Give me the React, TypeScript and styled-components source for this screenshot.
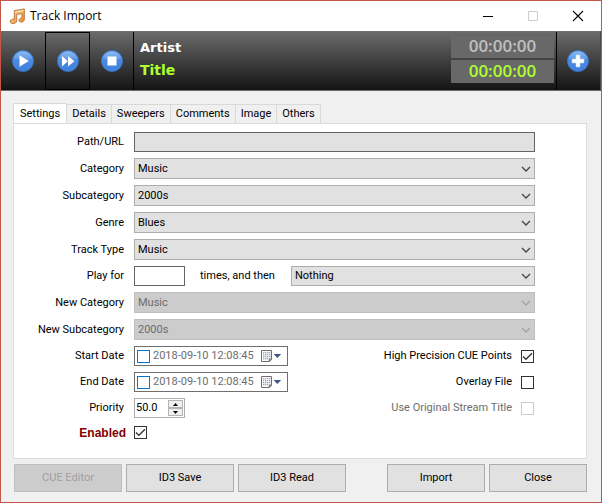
import React from "react";
import styled, { createGlobalStyle, css } from "styled-components";

const GlobalStyle = createGlobalStyle`
  *, *::before, *::after { box-sizing: border-box; }
  body { margin: 0; background: #f0f0f0; }
  button, input, select { font: inherit; color: inherit; margin: 0; border-radius: 0; }
`;

const uiFont = `Roboto, "Liberation Sans", sans-serif`;

const Window = styled.div`
  min-height: 100vh;
  display: flex;
  flex-direction: column;
  border: 1px solid #c2574b;
  background: #f0f0f0;
  color: #000;
  font: 11px/16px ${uiFont};
`;

const TitleBar = styled.header`
  display: flex;
  align-items: center;
  height: 30px;
  padding-left: 8px;
  background: #fff;
`;

const WindowTitle = styled.h1`
  flex: 1;
  margin: 0 0 0 4px;
  font: 12px/16px "Open Sans", "Noto Sans", sans-serif;
`;

const CaptionButton = styled.button`
  width: 45px;
  height: 28px;
  padding: 0;
  border: 0;
  background: none;
  display: grid;
  place-items: center;
`;

const CaptionButtons = styled.div`
  display: flex;
  margin-right: 1px;
`;

const Player = styled.section`
  display: flex;
  height: 60px;
  border-top: 1px solid #6e6e6e;
  border-bottom: 1px solid #6a6a6a;
  border-right: 1px solid #4a4a4a;
  background: linear-gradient(#6a6a6a, #141414);
`;

const PlayerButton = styled.button<{ $edge?: "all" | "left" | "right" }>`
  width: 44px;
  height: 58px;
  padding: 0;
  background: none;
  border: 0 solid #000;
  display: grid;
  place-items: center;
  ${(p) => p.$edge === "all" && css`width: 45px; border-width: 1px;`}
  ${(p) => p.$edge === "left" && css`padding-right: 2px; border-left-width: 1px;`}
  ${(p) => p.$edge === "right" && css`border-right-width: 1px;`}
`;

const TrackInfo = styled.div`
  flex: 1;
  padding: 5px 0 0 6px;
  font-family: "DejaVu Sans", sans-serif;
  font-weight: bold;
`;

const Artist = styled.div`
  color: #fff;
  font-size: 13px;
  line-height: 22px;
`;

const TrackTitle = styled.div`
  color: #adff2f;
  font-size: 14px;
  line-height: 22px;
`;

const Timers = styled.div`
  display: flex;
  flex-direction: column;
  gap: 2px;
  width: 103px;
  margin: 4px 2px 0 0;
`;

const Timer = styled.div<{ $live?: boolean }>`
  height: ${(p) => (p.$live ? 23 : 22)}px;
  background: #686868;
  color: ${(p) => (p.$live ? "#adff2f" : "#c0c0c0")};
  font: 600 17px/${(p) => (p.$live ? 22 : 20)}px "Open Sans", "Noto Sans", sans-serif;
  text-align: center;
`;

const Body = styled.main`
  flex: 1;
  display: flex;
  flex-direction: column;
  padding: 12px 14px 10px 12px;
`;

const TabList = styled.div`
  display: flex;
  align-items: flex-end;
`;

const Tab = styled.button<{ $active?: boolean }>`
  height: ${(p) => (p.$active ? 21 : 19)}px;
  padding: ${(p) => (p.$active ? "0 6px 1px" : "0 5px")};
  margin-bottom: ${(p) => (p.$active ? -1 : 0)}px;
  border: 1px solid #d9d9d9;
  border-bottom: 0;
  border-left-width: ${(p) => (p.$active ? 1 : 0)}px;
  background: ${(p) => (p.$active ? "#fff" : "#f0f0f0")};
  white-space: nowrap;
`;

const Panel = styled.section`
  flex: 1;
  display: flex;
  flex-direction: column;
  gap: 6px;
  padding: 8px 51px 12px 0;
  border: 1px solid #dcdcdc;
  background: #fff;
`;

const Row = styled.div<{ $height?: number }>`
  display: flex;
  align-items: center;
  height: ${(p) => p.$height ?? 20}px;
`;

const FieldLabel = styled.label<{ $strong?: boolean }>`
  width: ${(p) => (p.$strong ? 112 : 110)}px;
  margin-right: ${(p) => (p.$strong ? 8 : 10)}px;
  text-align: right;
  white-space: nowrap;
  ${(p) => p.$strong && css`color: #800000; font: bold 12px/16px "Liberation Sans", Arial, sans-serif;`}
`;

const TextInput = styled.input<{ $short?: boolean }>`
  ${(p) => (p.$short ? css`width: 51px;` : css`flex: 1; min-width: 0;`)}
  height: 20px;
  padding: 0 3px;
  border: 1px solid #646464;
  background: ${(p) => (p.readOnly ? "#e1e1e1" : "#fff")};
`;

const SelectBox = styled.div`
  flex: 1;
  min-width: 0;
  display: grid;
  align-items: center;
  height: 100%;
  > * { grid-area: 1 / 1; }
  > svg { justify-self: end; margin-right: 4px; pointer-events: none; }
`;

const Select = styled.select`
  appearance: none;
  width: 100%;
  height: 100%;
  padding: 0 20px 0 3px;
  border: 1px solid #adadad;
  background: #e1e1e1;
  &:disabled { background: #ccc; border-color: #bfbfbf; color: #6d6d6d; opacity: 1; }
`;

const Between = styled.span`
  width: 106px;
  padding-left: 15px;
  white-space: nowrap;
`;

const CheckBox = styled.input<{ $accent?: boolean }>`
  appearance: none;
  flex: none;
  width: 13px;
  height: 13px;
  border: 1px solid ${(p) => (p.$accent ? "#0078d7" : "#333")};
  background: #fff;
  &:disabled { border-color: #ccc; }
`;

const CheckWrap = styled.span`
  display: grid;
  place-items: center;
  > * { grid-area: 1 / 1; }
  > svg { pointer-events: none; }
`;

const OptionLabel = styled.label<{ $muted?: boolean }>`
  margin: 0 9px 0 auto;
  white-space: nowrap;
  color: ${(p) => (p.$muted ? "#6d6d6d" : "#000")};
`;

const OptionBox = styled.span`
  display: flex;
  margin-right: 1px;
`;

const DateField = styled.div`
  display: flex;
  align-items: center;
  width: 154px;
  height: 20px;
  padding: 0 5px 0 2px;
  border: 1px solid #6f6f6f;
  background: #fff;
  color: #6d6d6d;
`;

const DateText = styled.input`
  flex: 1;
  min-width: 0;
  height: 16px;
  padding: 0 0 0 3px;
  border: 0;
  background: none;
`;

const PlainButton = styled.button`
  flex: none;
  padding: 0;
  border: 0;
  background: none;
  display: flex;
  align-items: center;
`;

const Spinner = styled.div`
  display: flex;
  width: 51px;
  height: 20px;
  padding: 1px;
  border: 1px solid #abadb3;
  background: #fff;
`;

const SpinnerInput = styled.input`
  flex: 1;
  min-width: 0;
  padding: 0;
  border: 0;
`;

const SpinnerButtons = styled.div`
  display: flex;
  flex-direction: column;
  width: 15px;
`;

const SpinButton = styled.button`
  flex: 1;
  min-height: 0;
  padding: 0;
  border: 1px solid #b4b4b4;
  background: #f0f0f0;
  display: grid;
  place-items: center;
`;

const Footer = styled.footer`
  display: flex;
  gap: 4px;
  margin: 5px 0 0 1px;
`;

const ActionButton = styled.button<{ $width: number; $apart?: boolean }>`
  width: ${(p) => p.$width}px;
  height: 28px;
  padding: 0;
  margin-left: ${(p) => (p.$apart ? "auto" : "0")};
  border: 1px solid #adadad;
  background: #e1e1e1;
  &:disabled { background: #ccc; border-color: #bfbfbf; color: #a0a0a0; }
`;

const MusicIcon = () => (
  <svg width="17" height="17" viewBox="0 0 17 17" aria-hidden="true">
    <defs>
      <linearGradient id="note" x1="0" y1="0" x2="1" y2="1">
        <stop offset="0" stopColor="#fbd79a" />
        <stop offset="1" stopColor="#e98a2c" />
      </linearGradient>
    </defs>
    <path
      d="M5.3 2.6 15.3 0.9V11.4C15.3 13.2 13.8 14.2 12.2 14.1 10.6 14 9.8 13 10 11.9 10.3 10.6 11.6 9.9 12.9 10.2V5.6L7.7 6.5V12.8C7.6 14.6 5.9 15.7 3.9 15.6 2 15.5 0.9 14.5 1.1 13.1 1.4 11.6 3.4 10.8 5.3 11.3Z"
      fill="url(#note)"
      stroke="#b9713a"
      strokeWidth="0.9"
      strokeLinejoin="round"
    />
    <path d="M6.2 3.4 14.4 2V3.2L6.2 4.6Z" fill="#fdeac4" />
  </svg>
);

const Orb = ({ children }: { children: React.ReactNode }) => (
  <svg width="24" height="24" viewBox="0 0 24 24" aria-hidden="true">
    <defs>
      <linearGradient id="orb" x1="0" y1="0" x2="0" y2="1">
        <stop offset="0" stopColor="#4d86d4" />
        <stop offset="0.45" stopColor="#4a8ae0" />
        <stop offset="1" stopColor="#3f80dd" />
      </linearGradient>
      <linearGradient id="shine" x1="0" y1="0" x2="0" y2="1">
        <stop offset="0" stopColor="#8dbaf0" />
        <stop offset="1" stopColor="#5b98e6" />
      </linearGradient>
    </defs>
    <circle cx="12" cy="12" r="10.6" fill="url(#orb)" stroke="#3a72bd" strokeWidth="0.8" />
    <path d="M2.6 9.8A9.6 9.6 0 0 1 21.4 9.8Q12 12 2.6 9.8Z" fill="url(#shine)" />
    <g fill="#fff">{children}</g>
  </svg>
);

const Chevron = ({ color = "#444" }: { color?: string }) => (
  <svg width="10" height="6" viewBox="0 0 10 6" aria-hidden="true">
    <path d="M1 1 5 5 9 1" fill="none" stroke={color} strokeWidth="1.3" />
  </svg>
);

const CalendarIcon = () => (
  <svg width="21" height="14" viewBox="0 0 21 14" aria-hidden="true">
    <path d="M0.5 1.5H10.5V10.5L8.5 12.5H0.5Z" fill="#fff" stroke="#77696c" />
    <path d="M10.5 10 8 12.5V10Z" fill="#8b7f87" stroke="#77696c" strokeWidth="0.5" />
    <g fill="#a3adbf">
      {[2, 4, 6, 8].map((x) => [3, 5, 7, 9].map((y) => <rect key={`${x}-${y}`} x={x} y={y} width="1.4" height="1.4" />))}
    </g>
    <path d="M12.6 5H20.2L16.4 9Z" fill="#3b5686" />
  </svg>
);

const Tick = () => (
  <svg width="13" height="13" viewBox="0 0 13 13" aria-hidden="true">
    <path d="M2 6.5 4.9 9.3 11 3.2" fill="none" stroke="#333" strokeWidth="1.3" />
  </svg>
);

type CheckProps = { id: string; checked?: boolean; disabled?: boolean };

function Check({ id, checked, disabled }: CheckProps) {
  const [on, setOn] = React.useState(!!checked);
  return (
    <CheckWrap>
      <CheckBox id={id} type="checkbox" checked={on} disabled={disabled} onChange={(e) => setOn(e.target.checked)} />
      {on && <Tick />}
    </CheckWrap>
  );
}

function Option({ label, ...check }: CheckProps & { label: string }) {
  return (
    <>
      <OptionLabel htmlFor={check.id} $muted={check.disabled}>{label}</OptionLabel>
      <OptionBox><Check {...check} /></OptionBox>
    </>
  );
}

function DropDown({ id, value, disabled, label }: { id: string; value: string; disabled?: boolean; label?: string }) {
  return (
    <SelectBox>
      <Select id={id} disabled={disabled} aria-label={label} defaultValue={value}>
        <option>{value}</option>
      </Select>
      <Chevron color={disabled ? "#a3a3a3" : "#444"} />
    </SelectBox>
  );
}

function SelectRow({ id, label, value, disabled }: { id: string; label: string; value: string; disabled?: boolean }) {
  return (
    <Row $height={21}>
      <FieldLabel htmlFor={id}>{label}</FieldLabel>
      <DropDown id={id} value={value} disabled={disabled} />
    </Row>
  );
}

function DatePicker({ id, label }: { id: string; label: string }) {
  return (
    <>
      <FieldLabel htmlFor={id}>{label}</FieldLabel>
      <DateField>
        <CheckBox type="checkbox" $accent aria-label={`Use ${label}`} />
        <DateText id={id} defaultValue="2018-09-10 12:08:45" />
        <PlainButton type="button" aria-label={`Pick ${label}`}><CalendarIcon /></PlainButton>
      </DateField>
    </>
  );
}

export default function App() {
  return (
    <>
      <GlobalStyle />
      <Window>
        <TitleBar>
          <MusicIcon />
          <WindowTitle>Track Import</WindowTitle>
          <CaptionButtons>
            <CaptionButton aria-label="Minimize">
              <svg width="12" height="12"><path d="M1 6.5H11" stroke="#000" /></svg>
            </CaptionButton>
            <CaptionButton aria-label="Maximize" disabled>
              <svg width="12" height="12"><path d="M1.5 1.5H10.5V10.5H1.5Z" fill="none" stroke="#ccc" /></svg>
            </CaptionButton>
            <CaptionButton aria-label="Close window">
              <svg width="12" height="12"><path d="M1 1 11 11M11 1 1 11" stroke="#000" strokeWidth="1.1" /></svg>
            </CaptionButton>
          </CaptionButtons>
        </TitleBar>

        <Player>
          <PlayerButton aria-label="Play">
            <Orb><path d="M8.5 6.2V17.8L17.8 12Z" /></Orb>
          </PlayerButton>
          <PlayerButton aria-label="Fast forward" $edge="all">
            <Orb><path d="M6 7V17.4L11.8 12.2ZM12 7V17.4L18.4 12.2Z" /></Orb>
          </PlayerButton>
          <PlayerButton aria-label="Stop" $edge="right">
            <Orb><path d="M7.5 7.5H16.5V16.5H7.5Z" /></Orb>
          </PlayerButton>
          <TrackInfo>
            <Artist>Artist</Artist>
            <TrackTitle>Title</TrackTitle>
          </TrackInfo>
          <Timers>
            <Timer>00:00:00</Timer>
            <Timer $live>00:00:00</Timer>
          </Timers>
          <PlayerButton aria-label="Add" $edge="left">
            <Orb><path d="M10.2 6.2H13.8V10.2H17.8V13.8H13.8V17.8H10.2V13.8H6.2V10.2H10.2Z" stroke="#fff" strokeWidth="0.6" strokeLinejoin="round" /></Orb>
          </PlayerButton>
        </Player>

        <Body>
          <TabList role="tablist">
            {["Settings", "Details", "Sweepers", "Comments", "Image", "Others"].map((name, i) => (
              <Tab key={name} role="tab" aria-selected={i === 0} $active={i === 0}>{name}</Tab>
            ))}
          </TabList>

          <Panel role="tabpanel">
            <Row>
              <FieldLabel htmlFor="path">Path/URL</FieldLabel>
              <TextInput id="path" readOnly />
            </Row>
            <SelectRow id="category" label="Category" value="Music" />
            <SelectRow id="subcategory" label="Subcategory" value="2000s" />
            <SelectRow id="genre" label="Genre" value="Blues" />
            <SelectRow id="type" label="Track Type" value="Music" />
            <Row>
              <FieldLabel htmlFor="playfor">Play for</FieldLabel>
              <TextInput id="playfor" $short />
              <Between>times, and then</Between>
              <DropDown id="then" value="Nothing" label="Then" />
            </Row>
            <SelectRow id="newcategory" label="New Category" value="Music" disabled />
            <SelectRow id="newsubcategory" label="New Subcategory" value="2000s" disabled />
            <Row>
              <DatePicker id="start" label="Start Date" />
              <Option id="precision" label="High Precision CUE Points" checked />
            </Row>
            <Row>
              <DatePicker id="end" label="End Date" />
              <Option id="overlay" label="Overlay File" />
            </Row>
            <Row>
              <FieldLabel htmlFor="priority">Priority</FieldLabel>
              <Spinner>
                <SpinnerInput id="priority" defaultValue="50.0" />
                <SpinnerButtons>
                  <SpinButton aria-label="Increase">
                    <svg width="5" height="3"><path d="M0 3 2.5 0 5 3Z" /></svg>
                  </SpinButton>
                  <SpinButton aria-label="Decrease">
                    <svg width="5" height="3"><path d="M0 0 2.5 3 5 0Z" /></svg>
                  </SpinButton>
                </SpinnerButtons>
              </Spinner>
              <Option id="streamtitle" label="Use Original Stream Title" disabled />
            </Row>
            <Row $height={17}>
              <FieldLabel htmlFor="enabled" $strong>Enabled</FieldLabel>
              <Check id="enabled" checked />
            </Row>
          </Panel>

          <Footer>
            <ActionButton $width={108} disabled>CUE Editor</ActionButton>
            <ActionButton $width={108}>ID3 Save</ActionButton>
            <ActionButton $width={108}>ID3 Read</ActionButton>
            <ActionButton $width={98} $apart>Import</ActionButton>
            <ActionButton $width={98}>Close</ActionButton>
          </Footer>
        </Body>
      </Window>
    </>
  );
}
